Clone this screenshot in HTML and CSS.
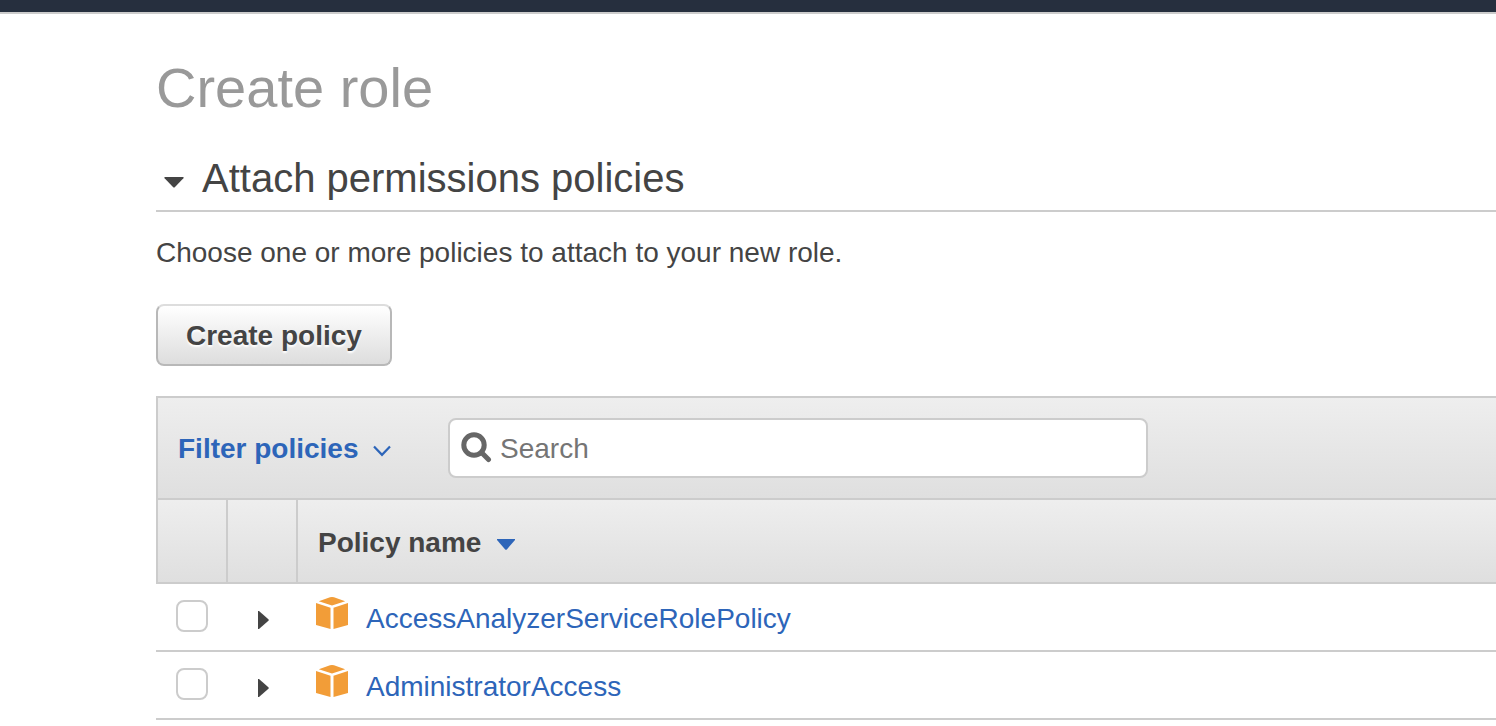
FILE: index.html
```html
<!DOCTYPE html>
<html lang="en">
<head>
<meta charset="utf-8">
<title>Create role</title>
<link rel="stylesheet" href="styles.css">
</head>
<body>
<header class="topbar"></header>
<main class="page">
  <h1 class="title">Create role</h1>
  <h2 class="section">
    <svg class="section-caret" width="20" height="11" viewBox="0 0 20 11" aria-hidden="true"><path d="M1 0h18q1.300 0 .4 1.200L11 10q-1 1-2 0L.6 1.200Q-.3 0 1 0z" fill="#444"/></svg>
    <span>Attach permissions policies</span>
  </h2>
  <p class="intro">Choose one or more policies to attach to your new role.</p>
  <button class="create" type="button">Create policy</button>

  <div class="toolbar">
    <button class="filter" type="button">
      <span>Filter policies</span>
      <svg class="chevron" width="18" height="12" viewBox="0 0 18 12" aria-hidden="true"><path d="M1 1.500l8 8.300 8-8.300" fill="none" stroke="#2d65b9" stroke-width="2.200"/></svg>
    </button>
    <label class="search">
      <svg class="glass" width="31" height="31" viewBox="0 0 31 31" aria-hidden="true"><circle cx="13" cy="13" r="10.200" fill="none" stroke="#666" stroke-width="5"/><path d="M20.500 20.500l7 7" stroke="#666" stroke-width="5" stroke-linecap="round"/></svg>
      <input class="search-input" type="text" placeholder="Search" aria-label="Search">
    </label>
  </div>

  <table class="policies">
    <thead>
      <tr>
        <th class="col-check"></th>
        <th class="col-expand"></th>
        <th class="col-name">
          <div class="name-head">
            <span>Policy name</span>
            <svg class="sort" width="18" height="11" viewBox="0 0 18 11" aria-hidden="true"><path d="M0 0h18v1L9.800 10.400q-.8.800-1.600 0L0 1z" fill="#2d65b9"/></svg>
          </div>
        </th>
      </tr>
    </thead>
    <tbody>
      <tr>
        <td><input class="check" type="checkbox" aria-label="AccessAnalyzerServiceRolePolicy"></td>
        <td>
          <button class="expand" type="button" aria-label="Expand AccessAnalyzerServiceRolePolicy">
            <svg width="11" height="18" viewBox="0 0 11 18" aria-hidden="true"><path d="M0 0h1l9.400 8.200q.8.800 0 1.600L1 18H0z" fill="#444"/></svg>
          </button>
        </td>
        <td>
          <div class="policy">
            <svg class="cube" width="32" height="32" viewBox="0 0 32 32" aria-hidden="true"><path d="M0 6l14.500 4.800V32L0 28zM32 6l-14.500 4.800V32L32 28zM2.800 4.200L14 .3q2-.5 4 0l11.200 3.900L16 8.600z" fill="#f29d38"/></svg>
            <a class="link" href="#">AccessAnalyzerServiceRolePolicy</a>
          </div>
        </td>
      </tr>
      <tr>
        <td><input class="check" type="checkbox" aria-label="AdministratorAccess"></td>
        <td>
          <button class="expand" type="button" aria-label="Expand AdministratorAccess">
            <svg width="11" height="18" viewBox="0 0 11 18" aria-hidden="true"><path d="M0 0h1l9.400 8.200q.8.800 0 1.600L1 18H0z" fill="#444"/></svg>
          </button>
        </td>
        <td>
          <div class="policy">
            <svg class="cube" width="32" height="32" viewBox="0 0 32 32" aria-hidden="true"><path d="M0 6l14.500 4.800V32L0 28zM32 6l-14.500 4.800V32L32 28zM2.800 4.200L14 .3q2-.5 4 0l11.200 3.900L16 8.600z" fill="#f29d38"/></svg>
            <a class="link" href="#">AdministratorAccess</a>
          </div>
        </td>
      </tr>
    </tbody>
  </table>
</main>
</body>
</html>
```

FILE: styles.css
```css
* {
  box-sizing: border-box;
}

body {
  margin: 0;
  background: #fff;
  color: #444;
  font: 28px/32px "Helvetica Neue", "Liberation Sans", Arial, sans-serif;
}

svg {
  display: block;
  flex: none;
}

button,
input {
  font: inherit;
}

.topbar {
  height: 14px;
  background: #262f3e;
  border-bottom: 2px solid #ccc;
}

.page {
  padding: 42px 0 0 156px;
}

.title {
  margin: 0;
  color: #999;
  font-size: 56px;
  font-weight: 400;
  line-height: 64px;
}

.section {
  display: flex;
  align-items: center;
  gap: 18px;
  margin: 34px 0 0;
  padding: 0 0 8px 8px;
  border-bottom: 2px solid #ccc;
  font-size: 40px;
  font-weight: 400;
  line-height: 48px;
}

.section-caret {
  margin-top: 8px;
}

.intro {
  margin: 25px 0 35px;
}

.create {
  display: block;
  height: 62px;
  padding: 2px 28px 0;
  border: 2px solid #b8b8b8;
  border-top-color: #ddd;
  border-radius: 8px;
  background: linear-gradient(#fff, #ddd);
  color: #444;
  font-weight: 700;
  text-shadow: 0 2px 2px #fff;
}

.toolbar {
  display: flex;
  align-items: center;
  margin-top: 30px;
  padding: 20px;
  border: 2px solid #ccc;
  border-right: 0;
  background: linear-gradient(#eee, #dfdfdf);
}

.filter {
  display: flex;
  align-items: center;
  gap: 14px;
  width: 270px;
  padding: 2px 0 0;
  border: 0;
  background: none;
  color: #2d65b9;
  font-weight: 700;
}

.chevron {
  margin-top: 4px;
}

.search {
  display: flex;
  align-items: center;
  gap: 8px;
  width: 700px;
  height: 60px;
  padding: 0 11px;
  border: 2px solid #ccc;
  border-radius: 8px;
  background: #fff;
}

.glass {
  margin-bottom: 2px;
}

.search-input {
  flex: 1;
  min-width: 0;
  padding: 2px 0 0;
  border: 0;
  outline: 0;
  background: none;
  color: #444;
}

.search-input::placeholder {
  color: #757575;
}

.policies {
  width: 100%;
  border-spacing: 0;
  table-layout: fixed;
}

.policies th {
  height: 84px;
  padding: 0;
  border-right: 2px solid #ccc;
  border-bottom: 2px solid #ccc;
  background: linear-gradient(#eee, #dfdfdf);
  text-align: left;
}

.policies .col-check {
  width: 72px;
  border-left: 2px solid #ccc;
}

.policies .col-expand {
  width: 70px;
}

.policies .col-name {
  padding-left: 20px;
  border-right: 0;
}

.name-head {
  display: flex;
  align-items: center;
  gap: 16px;
  padding-top: 4px;
}

.sort {
  margin-top: 2px;
}

.policies td {
  height: 68px;
  padding: 0;
  border-bottom: 2px solid #ccc;
}

.check {
  display: block;
  width: 32px;
  height: 32px;
  margin: 0 0 2px 20px;
  appearance: none;
  border: 2px solid #ccc;
  border-radius: 8px;
  background: #fff;
}

.expand {
  display: block;
  margin: 6px 0 0 30px;
  padding: 0;
  border: 0;
  background: none;
}

.policy {
  display: flex;
  align-items: center;
  gap: 18px;
  padding: 4px 0 0 18px;
}

.cube {
  margin-bottom: 12px;
}

.link {
  color: #2d65b9;
  text-decoration: none;
}
```
